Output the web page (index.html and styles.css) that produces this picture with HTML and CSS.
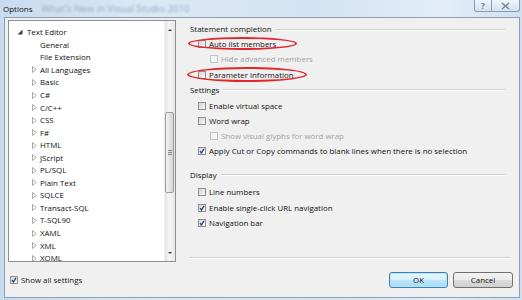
FILE: index.html
```html
<!DOCTYPE html>
<html lang="en">
<head>
    <meta charset="UTF-8">
    <title>Options</title>
    <link rel="stylesheet" href="styles.css">
</head>
<body>
    <div class="window">
        <div class="titlebar">
            <span class="title">Options</span>
            <span class="title-ghost">What's New in Visual Studio 2010</span>
            <div class="caption">
                <span class="cap cap-help">?</span>
                <span class="cap cap-close">
                    <svg width="9" height="8" viewBox="0 0 9 8"><path d="M1 1 L8 7 M8 1 L1 7" stroke="#7a8696" stroke-width="1.6"/></svg>
                </span>
            </div>
        </div>
        <div class="frame">
            <div class="client">
                <div class="main">
                    <div class="tree">
                        <div class="tree-list">
                            <div class="node"><span class="tw tw-open"></span>Text Editor</div>
                            <div class="node child"><span class="tw"></span>General</div>
                            <div class="node child"><span class="tw"></span>File Extension</div>
                            <div class="node child"><span class="tw tw-closed"></span>All Languages</div>
                            <div class="node child"><span class="tw tw-closed"></span>Basic</div>
                            <div class="node child"><span class="tw tw-closed"></span>C#</div>
                            <div class="node child"><span class="tw tw-closed"></span>C/C++</div>
                            <div class="node child"><span class="tw tw-closed"></span>CSS</div>
                            <div class="node child"><span class="tw tw-closed"></span>F#</div>
                            <div class="node child"><span class="tw tw-closed"></span>HTML</div>
                            <div class="node child"><span class="tw tw-closed"></span>JScript</div>
                            <div class="node child"><span class="tw tw-closed"></span>PL/SQL</div>
                            <div class="node child"><span class="tw tw-closed"></span>Plain Text</div>
                            <div class="node child"><span class="tw tw-closed"></span>SQLCE</div>
                            <div class="node child"><span class="tw tw-closed"></span>Transact-SQL</div>
                            <div class="node child"><span class="tw tw-closed"></span>T-SQL90</div>
                            <div class="node child"><span class="tw tw-closed"></span>XAML</div>
                            <div class="node child"><span class="tw tw-closed"></span>XML</div>
                            <div class="node child"><span class="tw tw-closed"></span>XOML</div>
                        </div>
                        <div class="scrollbar">
                            <div class="sb-btn"><span class="arrow-up"></span></div>
                            <div class="sb-track"><div class="sb-thumb"></div></div>
                            <div class="sb-btn"><span class="arrow-down"></span></div>
                        </div>
                    </div>

                    <div class="pane">
                        <div class="group-title">Statement completion</div>
                        <div class="row">
                            <span class="mark mark-auto"></span>
                            <span class="cb"></span>Auto list members
                        </div>
                        <div class="row sub disabled"><span class="cb"></span>Hide advanced members</div>
                        <div class="row">
                            <span class="mark mark-param"></span>
                            <span class="cb"></span>Parameter information
                        </div>

                        <div class="group-title settings">Settings</div>
                        <div class="row"><span class="cb"></span>Enable virtual space</div>
                        <div class="row"><span class="cb"></span>Word wrap</div>
                        <div class="row sub disabled short"><span class="cb"></span>Show visual glyphs for word wrap</div>
                        <div class="row"><span class="cb checked"></span>Apply Cut or Copy commands to blank lines when there is no selection</div>

                        <div class="group-title display">Display</div>
                        <div class="row"><span class="cb"></span>Line numbers</div>
                        <div class="row"><span class="cb checked"></span>Enable single-click URL navigation</div>
                        <div class="row"><span class="cb checked"></span>Navigation bar</div>
                        <div class="pane-end"></div>
                    </div>
                </div>

                <div class="footer">
                    <div class="show-all"><span class="cb checked"></span>Show all settings</div>
                    <div class="buttons">
                        <button class="btn btn-default">OK</button>
                        <button class="btn">Cancel</button>
                    </div>
                </div>
            </div>
        </div>
    </div>
</body>
</html>
```

FILE: styles.css
```css
body {
    margin: 0;
    width: 522px;
    height: 300px;
    overflow: hidden;
    font-family: "Open Sans", "Liberation Sans", sans-serif;
    font-size: 7.9px;
    color: #111;
    background: #c8daee;
}
.window {
    height: 300px;
    display: flex;
    flex-direction: column;
    background: linear-gradient(90deg, #c9dbef 0%, #dbe8f6 30%, #d3e3f3 60%, #e2edf8 85%, #cfe0f1 100%);
}
.titlebar {
    height: 17px;
    display: flex;
    align-items: center;
    flex: none;
}
.title {
    margin-left: 3px;
    color: #111;
    font-size: 8px;
}
.title-ghost {
    margin-left: 9px;
    color: #94abc6;
    filter: blur(1.1px);
    font-size: 9.6px;
}
.caption {
    margin-left: auto;
    margin-right: 2px;
    align-self: flex-start;
    display: flex;
}
.cap {
    height: 12px;
    box-sizing: border-box;
    border: 1px solid #8c9bb0;
    border-top: none;
    background: linear-gradient(180deg, #eef4fb, #d4e1f0);
    display: flex;
    align-items: center;
    justify-content: center;
    color: #6f7c8e;
    font-size: 8px;
    font-weight: bold;
}
.cap-help {
    width: 18px;
    border-radius: 0 0 0 3px;
}
.cap-close {
    width: 28px;
    border-left: none;
    border-radius: 0 0 3px 0;
}
.frame {
    flex: 1;
    padding: 0 2px 2px 4px;
    display: flex;
}
.client {
    flex: 1;
    border: 1px solid #8e9db3;
    background: #f0f0f0;
    padding: 2px 6px 0 3px;
    display: flex;
    flex-direction: column;
}
.main {
    display: flex;
    gap: 14px;
}

/* tree */
.tree {
    width: 168px;
    height: 242px;
    box-sizing: border-box;
    border: 1px solid #8a8e96;
    background: #fff;
    display: flex;
    overflow: hidden;
}
.tree-list {
    flex: 1;
    padding-top: 5px;
}
.node {
    height: 12.56px;
    display: flex;
    align-items: center;
    padding-left: 8px;
    white-space: nowrap;
}
.node.child {
    padding-left: 21px;
}
.tw {
    width: 10px;
    height: 8px;
    flex: none;
    background-repeat: no-repeat;
    background-position: 2px center;
}
.tw-closed {
    background-image: url("data:image/svg+xml,%3Csvg xmlns='http://www.w3.org/2000/svg' width='5' height='7'%3E%3Cpath d='M0.5 0.5 L4.2 3.5 L0.5 6.5 Z' fill='%23fff' stroke='%23a8a8a8'/%3E%3C/svg%3E");
}
.tw-open {
    background-position: 0 center;
    background-image: url("data:image/svg+xml,%3Csvg xmlns='http://www.w3.org/2000/svg' width='6' height='6'%3E%3Cpath d='M5.5 0.5 L5.5 5.5 L0.5 5.5 Z' fill='%23404040'/%3E%3C/svg%3E");
}
.scrollbar {
    width: 10px;
    flex: none;
    border-left: 1px solid #ececec;
    background: linear-gradient(90deg, #e4e4e4, #f4f4f4 40%, #e9e9e9);
    display: flex;
    flex-direction: column;
}
.sb-btn {
    height: 17px;
    display: flex;
    align-items: center;
    justify-content: center;
}
.arrow-up,
.arrow-down {
    width: 0;
    height: 0;
    border-left: 2px solid transparent;
    border-right: 2px solid transparent;
}
.arrow-up {
    border-bottom: 2px solid #3a3a3a;
}
.arrow-down {
    border-top: 2px solid #3a3a3a;
}
.sb-track {
    flex: 1;
    padding-top: 74px;
}
.sb-thumb {
    height: 81px;
    margin: 0 1px 0 0;
    box-sizing: border-box;
    border: 1px solid #9a9a9a;
    border-radius: 2px;
    background: linear-gradient(90deg, #f3f3f3, #e3e3e3 50%, #d6d6d6);
    display: flex;
    align-items: center;
    justify-content: center;
}
.sb-thumb::after {
    content: "";
    width: 4px;
    height: 5px;
    background: repeating-linear-gradient(180deg, #8a8a8a 0 1px, transparent 1px 2px);
}

/* options pane */
.pane {
    flex: 1;
    padding-top: 2px;
    display: flex;
    flex-direction: column;
}
.group-title {
    height: 14px;
    flex: none;
    display: flex;
    align-items: center;
    white-space: nowrap;
}
.group-title::after {
    content: "";
    flex: 1;
    height: 1px;
    margin: 1px 8px 0 4px;
    background: #d0d0d0;
    border-bottom: 1px solid #fff;
}
.group-title.settings {
    margin-bottom: 1.5px;
}
.group-title.display {
    margin-top: 9px;
    margin-bottom: 3px;
}
.row {
    position: relative;
    height: 15.5px;
    flex: none;
    display: flex;
    align-items: center;
    padding-left: 8px;
    white-space: nowrap;
}
.row.short {
    height: 14px;
}
.row.sub {
    padding-left: 20px;
}
.row.disabled {
    color: #a3a3a3;
}
.cb {
    width: 8px;
    height: 8px;
    flex: none;
    box-sizing: border-box;
    margin-right: 3px;
    border: 1px solid #8f8f8f;
    background: linear-gradient(135deg, #d4d4d4, #f9f9f9);
    background-repeat: no-repeat;
}
.disabled .cb {
    border-color: #c4c4c4;
    background: #f4f4f4;
}
.cb.checked {
    background-image: url("data:image/svg+xml,%3Csvg xmlns='http://www.w3.org/2000/svg' width='6' height='6'%3E%3Cpath d='M1 3.2 L2.4 5 L5 0.8' fill='none' stroke='%23243f8f' stroke-width='1.3'/%3E%3C/svg%3E"), linear-gradient(135deg, #d4d4d4, #f9f9f9);
}
.mark {
    position: absolute;
    box-sizing: border-box;
    border: 2px solid #e3262c;
    border-radius: 50%;
}
.mark-auto {
    left: -2px;
    top: 1px;
    width: 109px;
    height: 13px;
}
.mark-param {
    left: -3px;
    top: 0;
    width: 120px;
    height: 15px;
}
.pane-end {
    margin-top: 26px;
    margin-right: 2px;
    height: 1px;
    background: #d0d0d0;
    border-bottom: 1px solid #fff;
}

/* footer */
.footer {
    flex: 1;
    display: flex;
    align-items: center;
}
.show-all {
    display: flex;
    align-items: center;
    margin-left: 2px;
}
.buttons {
    margin-left: auto;
    display: flex;
    gap: 5px;
}
.btn {
    width: 60px;
    height: 16px;
    padding: 0;
    font-family: inherit;
    font-size: 7.9px;
    color: #111;
    border: 1px solid #707070;
    border-radius: 3px;
    background: linear-gradient(180deg, #f2f2f2 0%, #ebebeb 50%, #dddddd 51%, #cfcfcf 100%);
}
.btn-default {
    width: 59px;
    border-color: #3c7fb1;
    box-shadow: inset 0 0 0 1px #b6e3fb;
    background: linear-gradient(180deg, #eaf6fd 0%, #d9f0fc 50%, #bee6fd 51%, #a7d9f5 100%);
}
```
